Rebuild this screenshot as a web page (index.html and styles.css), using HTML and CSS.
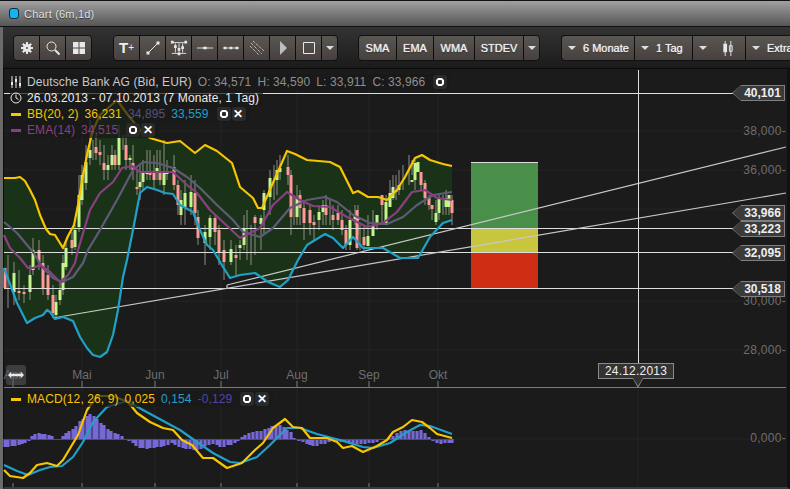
FILE: index.html
```html
<!DOCTYPE html>
<html lang="de">
<head>
<meta charset="UTF-8" />
<title>Chart (6m,1d)</title>
<link rel="stylesheet" href="styles.css">
</head>
<body>
<div class="window">
  <div class="titlebar"><span class="win-dot"></span><span class="win-title">Chart (6m,1d)</span></div>
  <div class="toolbar">
    <div class="btn-group">
      <button class="btn icon"><svg viewBox="0 0 16 16"><circle class="fill" cx="8" cy="8" r="4"/><path class="line thick" d="M8 2v12M2 8h12M3.8 3.8l8.400 8.400M12.200 3.800l-8.400 8.400"/><circle class="hole" cx="8" cy="8" r="1"/></svg></button>
      <button class="btn icon"><svg viewBox="0 0 16 16"><circle class="line" cx="6.5" cy="6.5" r="4.5"/><path class="line thick" d="M10 10l4.5 4.5"/></svg></button>
      <button class="btn icon"><svg viewBox="0 0 16 16"><path class="fill" d="M2 2h5.5v5.5H2zM8.500 2H14v5.500H8.500zM2 8.500h5.500V14H2zM8.500 8.500H14V14H8.500z"/></svg></button>
    </div>
    <div class="btn-group">
      <button class="btn icon t-plus">T<small>+</small></button>
      <button class="btn icon"><svg viewBox="0 0 16 16"><path class="line" d="M3 13L13 3"/><path class="fill" d="M1.5 11.500h3v3h-3zM11.500 1.500h3v3h-3z"/></svg></button>
      <button class="btn icon wide"><svg viewBox="0 0 20 16"><path class="line" d="M2 2h16M2 14h16M6 3v10M10 3v10M14 3v10"/><path class="fill" d="M1 0h3v3H1zM16 0h3v3h-3zM4.500 5h3v3h-3zM8.500 8h3v3h-3zM12.500 6h3v3h-3zM8.500 13h3v3h-3z"/></svg></button>
      <button class="btn icon wide"><svg viewBox="0 0 20 16"><path class="line" d="M1 8h18"/><path class="fill" d="M8 6.500h4v3H8z"/></svg></button>
      <button class="btn icon wide"><svg viewBox="0 0 20 16"><path class="line" d="M1 8h18"/><path class="fill" d="M2 6.500h3v3H2zM8.500 6.500h3v3h-3zM15 6.500h3v3h-3z"/></svg></button>
      <button class="btn icon"><svg viewBox="0 0 16 16"><path class="line" d="M2 3l11 11M4 1l11 10M1 6l9 9" stroke-dasharray="1 1"/></svg></button>
      <button class="btn icon"><svg viewBox="0 0 16 16"><path class="fill dim" d="M5 1l7 7-7 7z"/></svg></button>
      <button class="btn icon"><svg viewBox="0 0 16 16"><path class="line" d="M2.5 2.500h11v11h-11z"/></svg></button>
      <button class="btn caret-only"><span class="caret"></span></button>
    </div>
    <div class="btn-group studies">
      <button class="btn text w-sma">SMA</button>
      <button class="btn text w-ema">EMA</button>
      <button class="btn text w-wma">WMA</button>
      <button class="btn text w-stdev">STDEV</button>
      <button class="btn caret-only"><span class="caret"></span></button>
    </div>
    <div class="btn-group open-end">
      <button class="btn text drop w-range"><span class="caret"></span>6 Monate</button>
      <button class="btn text drop w-tag"><span class="caret"></span>1 Tag</button>
      <button class="btn text drop w-type"><span class="caret"></span><svg class="candle-icon" viewBox="0 0 12 16"><path class="line" d="M3 0v16M9 0v16"/><path class="fill" d="M1 3h4v9H1z"/><path class="line" d="M7.500 5h3v6h-3z"/></svg></button>
      <button class="btn text drop w-extra"><span class="caret"></span>Extra</button>
    </div>
  </div>
  <div class="chart">
    <svg class="plot" viewBox="0 0 790 489" width="790" height="489">
      <path class="grid" d="M82 70V387M155 70V387M221 70V387M297 70V387M369 70V387M438 70V387M4 131H786M4 170H786M4 209H786M4 301H786M4 350H786M4 439H786M82 388V486M155 388V486M221 388V486M297 388V486M369 388V486M438 388V486M638 388V486"/>
      <path class="bb-fill" d="M4 178L15 178 20 177 25 181 30 190 35 200 40 215 46 229 50 234 55 235 63 248 68 236 74 225 78 205 83 175 88 150 93 130 100 115 108 108 117 100 128 115 140 130 150 138 167 143 180 141 195 153 205 145 217 151 232 163 240 187 253 198 258 208 262 208 272 185 287 151 295 154 307 160 330 162 340 167 353 193 358 191 368 197 378 197 387 200 397 190 405 177 415 158 422 155 430 160 443 164 452 166V220L443 223 430 237 418 258 400 258 383 248 363 248 353 237 343 248 333 238 325 234 307 245 298 260 288 280 280 287 268 282 255 273 240 275 230 278 223 267 213 250 207 245 200 230 193 212 180 205 173 194 165 193 157 190 147 187 140 193 133 230 127 260 123 277 118 310 113 335 107 352 100 357 93 355 87 348 80 337 73 321 63 317 55 319 50 312 47 310 43 315 35 318 27 323 17 303 5 270 4 268Z"/>
      <!-- candles -->
      <path class="wick" d="M8 255V308M14 262V305M19 270V300M24 285V303M30 265V300M33 238V275M39 240V270M43 255V295M48 265V300M53 285V318M56 295V318M60 280V305M63 255V295M66 240V270M72 232V255M75 225V250M79 175V232M82 165V205M86 145V190M90 120V165M93 140V160M96 135V160M100 140V165M104 145V180M108 155V180M112 145V170M115 150V170M119 125V170M123 135V150M126 135V170M130 155V170M133 145V180M137 170V195M140 165V200M143 160V190M147 150V180M150 150V180M154 155V190M157 150V180M160 150V185M164 140V195M167 160V180M174 155V190M178 180V215M181 190V225M185 180V225M191 175V215M195 180V225M198 210V245M205 225V265M210 215V250M215 215V245M219 225V265M224 240V280M231 240V265M236 245V275M240 240V260M244 215V250M247 210V260M251 225V265M255 215V255M261 215V250M264 190V235M270 170V215M274 165V200M277 160V195M280 155V180M288 155V185M291 170V235M294 195V225M297 185V225M300 190V225M304 200V240M310 205V235M314 215V240M319 205V230M323 200V225M326 195V225M330 200V225M333 205V230M338 205V225M342 210V235M346 225V250M350 210V250M355 205V225M358 205V235M357 215V250M360 225V250M364 225V250M368 215V240M373 210V235M377 215V230M382 205V225M386 195V225M390 180V205M393 175V200M396 175V200M399 170V195M403 165V190M409 155V185M412 160V175M415 160V190M421 175V190M425 180V205M429 195V210M432 205V220M436 200V225M439 195V220M443 195V215M446 190V215M449 195V215M452 195V225"/>
      <path class="candle-up" d="M14 273V292M30 275V292M33 250V270M56 302V315M60 290V300M63 263V290M66 248V267M75 230V247M79 195V227M82 175V200M86 162V183M90 150V158M108 165V170M112 155V165M119 138V165M130 158V160M140 182V187M143 172V182M147 172V174M157 168V172M164 173V185M167 172V174M181 200V215M185 193V207M191 192V207M205 232V243M210 218V237M231 249V262M240 245V248M244 228V245M261 218V224M264 193V210M270 178V197M277 170V180M280 168V172M297 198V217M319 212V220M323 205V212M350 220V245M355 216V219M386 202V225M358 218V220M373 225V236M368 236V246M377 215V224M390 193V207M393 187V198M399 185V190M412 180V182M415 163V180M418 162V172M436 213V222M439 198V213M446 198V207M449 195V207"/>
      <path class="candle-down" d="M5 268V288M19 291V293M24 292V294M39 250V262M43 263V288M48 275V295M53 295V313M72 240V248M96 147V153M100 152V155M104 163V170M115 155V165M126 145V160M133 163V170M137 187V189M150 173V175M154 172V180M160 172V180M174 167V185M178 185V205M195 193V213M198 217V238M215 218V232M219 230V253M224 250V262M236 255V258M255 217V223M288 167V175M291 175V217M300 195V208M304 208V223M310 210V223M314 222V225M326 205V215M333 215V220M338 213V220M342 220V230M346 230V245M357 210V248M364 237V245M382 195V205M396 190V192M421 172V185M425 183V198M429 198V205M432 205V209M452 200V213"/>
      <!-- zones, levels and trend lines -->
      <rect class="zone-green" x="471" y="162" width="67" height="66"/>
      <rect class="zone-yellow" x="471" y="228" width="67" height="25"/>
      <rect class="zone-red" x="471" y="253" width="67" height="35"/>
      <path class="level" d="M471 162.500H538M4 93.500H737M4 228.500H737M4 252.500H737M4 288.500H737"/>
      <path class="trend" d="M53 318L786 193M227 285L786 147M227 285V289"/>
      <path class="curve bb" d="M4 178L15 178 20 177 25 181 30 190 35 200 40 215 46 229 50 234 55 235 63 248 68 236 74 225 78 205 83 175 88 150 93 130 100 115 108 108 117 100 128 115 140 130 150 138 167 143 180 141 195 153 205 145 217 151 232 163 240 187 253 198 258 208 262 208 272 185 287 151 295 154 307 160 330 162 340 167 353 193 358 191 368 197 378 197 387 200 397 190 405 177 415 158 422 155 430 160 443 164 452 166"/>
      <path class="curve mid" d="M4 222L17 233 33 252 42 267 53 278 62 282 73 277 83 263 88 250 100 230 117 200 133 170 143 162 157 163 173 168 187 177 200 188 217 205 233 220 243 232 260 237 273 228 290 208 307 200 325 197 337 202 353 215 370 223 387 224 403 217 417 205 433 195 452 192"/>
      <path class="curve ema" d="M4 235L10 248 20 258 28 268 33 268 40 265 50 272 60 282 68 275 75 263 78 250 90 210 100 193 113 182 122 168 132 166 140 172 157 172 173 172 187 185 197 193 210 210 223 222 240 238 260 228 273 205 287 192 300 200 313 206 330 207 347 217 367 227 383 223 397 212 412 192 425 190 437 198 452 200"/>
      <path class="curve lower" d="M4 268L17 303 27 323 35 318 43 315 47 310 50 312 55 319 63 317 73 321 80 337 87 348 93 355 100 357 107 352 113 335 118 310 123 277 127 260 133 230 140 193 147 187 157 190 165 193 173 194 180 205 193 212 200 230 207 245 213 250 223 267 230 278 240 275 255 273 268 282 280 287 288 280 298 260 307 245 325 234 333 238 343 248 353 237 363 248 383 248 400 258 418 258 430 237 443 223 452 220"/>
      <path class="level" d="M638.500 70V363"/>
      <!-- axis -->
      <path class="axis" d="M4 387.500H786M13 381V387M82 381V387M155 381V387M221 381V387M297 381V387M369 381V387M438 381V387M13 483V487M82 483V487M155 483V487M221 483V487M297 483V487M369 483V487M438 483V487"/>
      <!-- macd histogram -->
      <path class="histo" d="M5 439V447M8 439V447M12 439V446M15 439V446M19 439V445M22 439V444M25 439V443M29 439V441M32 439V436M35 439V434M39 439V433M42 439V434M45 439V434M49 439V435M52 439V436M56 439V439M59 439V439M63 439V436M66 439V433M69 439V431M73 439V429M76 439V426M80 439V421M83 439V419M87 439V416M90 439V414M94 439V416M97 439V419M101 439V423M104 439V425M108 439V429M111 439V431M115 439V433M118 439V434M122 439V436M125 439V439M129 439V441M133 439V443M136 439V446M140 439V448M143 439V448M147 439V449M150 439V448M154 439V448M157 439V447M161 439V447M164 439V446M168 439V445M172 439V443M175 439V445M179 439V447M183 439V448M186 439V449M190 439V449M194 439V450M197 439V450M201 439V449M205 439V446M209 439V445M213 439V444M217 439V445M220 439V447M224 439V447M228 439V445M231 439V445M235 439V443M238 439V441M242 439V437M245 439V435M249 439V433M253 439V432M257 439V431M261 439V431M265 439V429M269 439V428M272 439V426M276 439V425M280 439V425M284 439V427M287 439V430M291 439V432M294 439V438M299 439V441M303 439V442M307 439V444M310 439V445M313 439V446M317 439V446M321 439V444M325 439V444M329 439V442M333 439V441M337 439V441M341 439V442M345 439V442M349 439V443M353 439V443M357 439V444M361 439V444M365 439V444M369 439V443M373 439V443M377 439V442M381 439V440M385 439V439M389 439V438M393 439V436M397 439V433M401 439V431M405 439V430M409 439V431M413 439V431M417 439V431M421 439V430M425 439V433M429 439V437M433 439V441M437 439V443M441 439V444M445 439V443M449 439V443M452 439V443"/>
      <path class="zero" d="M4 439.500H452"/>
      <path class="curve lower" d="M4 465L17 471 28 475 40 470 50 467 62 466 73 457 83 442 93 422 107 407 127 401 143 410 167 423 180 430 197 442 213 453 230 462 240 463 257 457 270 445 287 428 300 428 317 434 340 440 363 447 373 448 390 443 407 432 420 425 430 426 452 434"/>
      <path class="curve bb" d="M4 470L10 476 23 478 30 473 37 465 47 463 57 466 63 460 72 445 78 435 87 410 97 396 113 396 128 402 137 413 150 422 163 428 173 430 182 440 192 445 203 458 213 458 227 468 242 463 255 450 263 443 273 428 285 419 293 427 302 428 310 438 327 438 337 442 343 448 352 446 363 452 377 446 387 440 393 432 403 427 412 420 422 422 430 428 437 434 452 438"/>
    </svg>

    <div class="legend">
      <div class="legend-row">
        <svg class="row-icon" viewBox="0 0 12 12"><path class="line" d="M2 0v12M6 0v12M10 0v12"/><path class="fill" d="M1 6h2v3H1zM5 3h2v3H5zM9 7h2v3H9z"/></svg>
        <span class="val-name">Deutsche Bank AG (Bid, EUR)</span>
        <span class="val-ohlc">O: 34,571</span><span class="val-ohlc">H: 34,590</span><span class="val-ohlc">L: 33,911</span><span class="val-ohlc">C: 33,966</span>
        <span class="ring-btn"><i class="ring"></i></span>
      </div>
      <div class="legend-row">
        <svg class="row-icon" viewBox="0 0 12 12"><circle class="line" cx="6" cy="6" r="5"/><path class="line" d="M6 2.500V6l2.500 1.500"/></svg>
        <span class="val-name bright">26.03.2013 - 07.10.2013 (7 Monate, 1 Tag)</span>
      </div>
      <div class="legend-row">
        <span class="dash dash-bb"></span>
        <span class="c-bb">BB(20, 2)</span><span class="c-bb">36,231</span><span class="c-mid">34,895</span><span class="c-blue">33,559</span>
        <span class="ring-btn"><i class="ring"></i><b>✕</b></span>
      </div>
      <div class="legend-row">
        <span class="dash dash-ema"></span>
        <span class="c-ema">EMA(14)</span><span class="c-ema">34,515</span>
        <span class="ring-btn"><i class="ring"></i><b>✕</b></span>
      </div>
    </div>

    <div class="legend legend-macd">
      <div class="legend-row">
        <span class="dash dash-bb"></span>
        <span class="c-bb">MACD(12, 26, 9)</span><span class="c-bb">0,025</span><span class="c-blue">0,154</span><span class="c-hist">-0,129</span>
        <span class="ring-btn"><i class="ring"></i><b>✕</b></span>
      </div>
    </div>

    <span class="y-label y-38">38,000-</span>
    <span class="y-label y-36">36,000-</span>
    <span class="y-label y-30">30,000-</span>
    <span class="y-label y-28">28,000-</span>
    <span class="y-label y-0">0,000-</span>

    <span class="x-label x-apr">Apr</span>
    <span class="x-label x-mai">Mai</span>
    <span class="x-label x-jun">Jun</span>
    <span class="x-label x-jul">Jul</span>
    <span class="x-label x-aug">Aug</span>
    <span class="x-label x-sep">Sep</span>
    <span class="x-label x-okt">Okt</span>

    <span class="price-tag tag-a">40,101</span>
    <span class="price-tag tag-b">33,966</span>
    <span class="price-tag tag-c">33,223</span>
    <span class="price-tag tag-d">32,095</span>
    <span class="price-tag tag-e">30,518</span>

    <span class="date-tag">24.12.2013</span>
    <span class="scroll-btn"><svg viewBox="0 0 20 10"><path class="fill" d="M0 5l4-4v2.500h12V1l4 4-4 4V6.500H4V9z"/></svg></span>
  </div>
</div>
</body>
</html>
```

FILE: styles.css
```css
* {
  box-sizing: border-box;
}

html, body {
  margin: 0;
  height: 489px;
  overflow: hidden;
  background: #1b1b1b;
}

body {
  font-family: "Liberation Sans", Arial, sans-serif;
  color: #ccc;
}

.window {
  width: 790px;
  height: 489px;
  display: flex;
  flex-direction: column;
  background: #6b6b6b;
  border-top: 1px solid #111;
}

.titlebar {
  height: 26px;
  padding-left: 9px;
  display: flex;
  align-items: center;
  gap: 5px;
  flex: none;
  background: linear-gradient(#a0a0a0, #565656);
  border-bottom: 1px solid #111;
}

.win-dot {
  width: 10px;
  height: 11px;
  border-radius: 3px;
  background: #12b5f2;
  border: 1px solid #0a2c3a;
}

.win-title {
  font-size: 11px;
  color: #e2e2e2;
  text-shadow: 0 1px 1px #333;
  letter-spacing: 0.2px;
}

.toolbar {
  height: 42px;
  flex: none;
  margin-left: 3px;
  padding: 8px 0 0 10px;
  display: flex;
  gap: 21px;
  background: linear-gradient(#333, #1b1b1b);
  border-bottom: 1px solid #0b0b0b;
  overflow: hidden;
}

.btn-group {
  display: flex;
  height: 26px;
  flex: none;
  background: #0d0d0d;
  border: 1px solid #111;
  border-radius: 4px;
  gap: 1px;
  overflow: hidden;
}

.studies {
  margin-left: -1px;
}

.open-end {
  border-right: 0;
  border-radius: 4px 0 0 4px;
}

.btn {
  height: 24px;
  padding: 0;
  border: 0;
  display: flex;
  align-items: center;
  justify-content: center;
  background: linear-gradient(#5a5652, #46413e);
  color: #eee;
  font-family: inherit;
  flex: none;
}

.btn svg {
  width: 16px;
  height: 16px;
}

.icon {
  width: 25px;
}

.btn .candle-icon {
  width: 12px;
  height: 15px;
}

.btn.wide svg {
  width: 18px;
}

.t-plus {
  font-size: 15px;
  font-weight: bold;
  padding-bottom: 1px;
}

.t-plus small {
  font-size: 10px;
  font-weight: normal;
}

.caret-only {
  width: 15px;
}

.caret {
  width: 0;
  height: 0;
  border-left: 4px solid transparent;
  border-right: 4px solid transparent;
  border-top: 4px solid #ddd;
  flex: none;
}

.text {
  font-size: 11px;
  color: #eee;
  text-shadow: 0 0 1px #eee, 0 1px 1px #222;
}

.drop {
  justify-content: flex-start;
  padding-left: 6px;
  gap: 7px;
}

.w-sma { width: 37px; }
.w-ema { width: 36px; }
.w-wma { width: 40px; }
.w-stdev { width: 48px; }
.w-range { width: 72px; }
.w-tag { width: 57px; }
.w-type { width: 52px; gap: 15px; }
.w-extra { width: 60px; }

.line {
  fill: none;
  stroke: #e8e8e8;
  stroke-width: 1;
}

.thick {
  stroke-width: 2;
}

.fill {
  fill: #e8e8e8;
}

.dim {
  fill: #bdbdbd;
}

.hole {
  fill: #4f4b48;
}

.chart {
  position: relative;
  flex: 1;
  margin-left: 3px;
  background: #1b1b1b;
  border-left: 1px solid #0c0c0c;
  border-right: 3px solid #111;
  border-bottom: 2px solid #3a3a3a;
}

.plot {
  position: absolute;
  left: -4px;
  top: -69px;
}

.grid {
  fill: none;
  stroke: #252525;
  stroke-width: 1;
}

.bb-fill {
  fill: #1a3318;
}

.wick {
  fill: none;
  stroke: #8e8e82;
  stroke-width: 1;
}

.candle-up {
  fill: none;
  stroke: #c4f58c;
  stroke-width: 3;
}

.candle-down {
  fill: none;
  stroke: #ff9a9a;
  stroke-width: 3;
}

.level {
  fill: none;
  stroke: #dedede;
  stroke-width: 1;
}

.trend {
  fill: none;
  stroke: #c8c8c8;
  stroke-width: 1.2;
}

.zone-green { fill: #4a8f49; }
.zone-yellow { fill: #c8c63f; }
.zone-red { fill: #cf2e14; }

.curve {
  fill: none;
  stroke-width: 2.2;
  stroke-linejoin: round;
}

.bb { stroke: #f7c600; }
.lower { stroke: #22a0c8; }
.mid { stroke: #5f5a78; }
.ema { stroke: #8a3f82; }

.axis {
  fill: none;
  stroke: #7a7a7a;
  stroke-width: 1;
}

.histo {
  fill: none;
  stroke: #7668d6;
  stroke-width: 3.2;
}

.zero {
  stroke: #4f4596;
  stroke-width: 1;
}

.legend {
  position: absolute;
  left: 6px;
  top: 5px;
  display: flex;
  flex-direction: column;
  font-size: 12px;
  line-height: 16px;
  letter-spacing: 0.1px;
}

.legend-macd {
  top: 322px;
}

.legend-row {
  display: flex;
  align-items: center;
  gap: 6px;
  height: 16px;
  background: rgba(24, 24, 24, 0.7);
  align-self: flex-start;
  padding-right: 4px;
}

.row-icon {
  width: 12px;
  height: 12px;
  margin-right: -1px;
}

.val-name { color: #c8c8c8; }
.bright { color: #ececec; }
.val-ohlc { color: #8e8e8e; }
.c-bb { color: #f7c600; }
.c-mid { color: #58537a; }
.c-blue { color: #22a0c8; }
.c-ema { color: #8a3f82; }
.c-hist { color: #4f48a8; }

.dash {
  width: 10px;
  height: 3px;
  margin-left: 1px;
  flex: none;
}

.dash-bb { background: #f7c600; }
.dash-ema { background: #8a3f82; }

.ring-btn {
  display: flex;
  align-items: center;
  gap: 1px;
  margin-left: 2px;
  color: #fff;
}

.ring-btn b {
  width: 14px;
  height: 14px;
  border-radius: 3px;
  background: #2a2a2a;
  font-size: 12px;
  line-height: 14px;
  text-align: center;
}

.ring {
  width: 14px;
  height: 14px;
  display: flex;
  border-radius: 3px;
  background: #2a2a2a radial-gradient(circle, #2a2a2a 2px, #fff 2.5px, #fff 4px, transparent 4.5px);
}

.y-label {
  position: absolute;
  right: 1px;
  font-size: 12px;
  line-height: 14px;
  letter-spacing: 0.3px;
  color: #6e6e6e;
}

.y-38 { top: 55px; }
.y-36 { top: 94px; }
.y-30 { top: 225px; }
.y-28 { top: 274px; }
.y-0 { top: 362px; }

.x-label {
  position: absolute;
  top: 299px;
  transform: translateX(-50%);
  font-size: 12px;
  line-height: 14px;
  color: #6e6e6e;
}

.x-apr { left: 9px; }
.x-mai { left: 78px; }
.x-jun { left: 151px; }
.x-jul { left: 217px; }
.x-aug { left: 293px; }
.x-sep { left: 365px; }
.x-okt { left: 434px; }

.price-tag {
  position: absolute;
  right: 2px;
  width: 44px;
  height: 16px;
  text-align: center;
  font-size: 12px;
  font-weight: bold;
  line-height: 15px;
  color: #efefef;
  background: #3a3a3a;
  border: 1px solid #7f7f7f;
  border-left: 0;
}

.price-tag::before,
.price-tag::after {
  content: "";
  position: absolute;
  top: -1px;
  width: 0;
  height: 0;
  border-top: 8px solid transparent;
  border-bottom: 8px solid transparent;
}

.price-tag::before {
  left: -9px;
  border-right: 9px solid #7f7f7f;
}

.price-tag::after {
  left: -8px;
  border-right: 8px solid #3a3a3a;
}

.tag-a { top: 16px; }
.tag-b { top: 136px; }
.tag-c { top: 152px; }
.tag-d { top: 176px; }
.tag-e { top: 212px; }

.date-tag {
  position: absolute;
  left: 594px;
  top: 294px;
  width: 76px;
  height: 16px;
  text-align: center;
  font-size: 12px;
  line-height: 14px;
  letter-spacing: 0.2px;
  color: #efefef;
  background: #333;
  border: 1px solid #8a8a8a;
}

.date-tag::before,
.date-tag::after {
  content: "";
  position: absolute;
  left: 34px;
  width: 0;
  height: 0;
  border-left: 5px solid transparent;
  border-right: 5px solid transparent;
}

.date-tag::before {
  top: 15px;
  border-top: 9px solid #8a8a8a;
}

.date-tag::after {
  top: 14px;
  border-top: 8px solid #333;
}

.scroll-btn {
  position: absolute;
  left: 2px;
  top: 296px;
  width: 20px;
  height: 20px;
  display: flex;
  align-items: center;
  justify-content: center;
  border-radius: 3px;
  background: rgba(90, 90, 90, 0.55);
}

.scroll-btn svg {
  width: 16px;
  height: 8px;
}
```
